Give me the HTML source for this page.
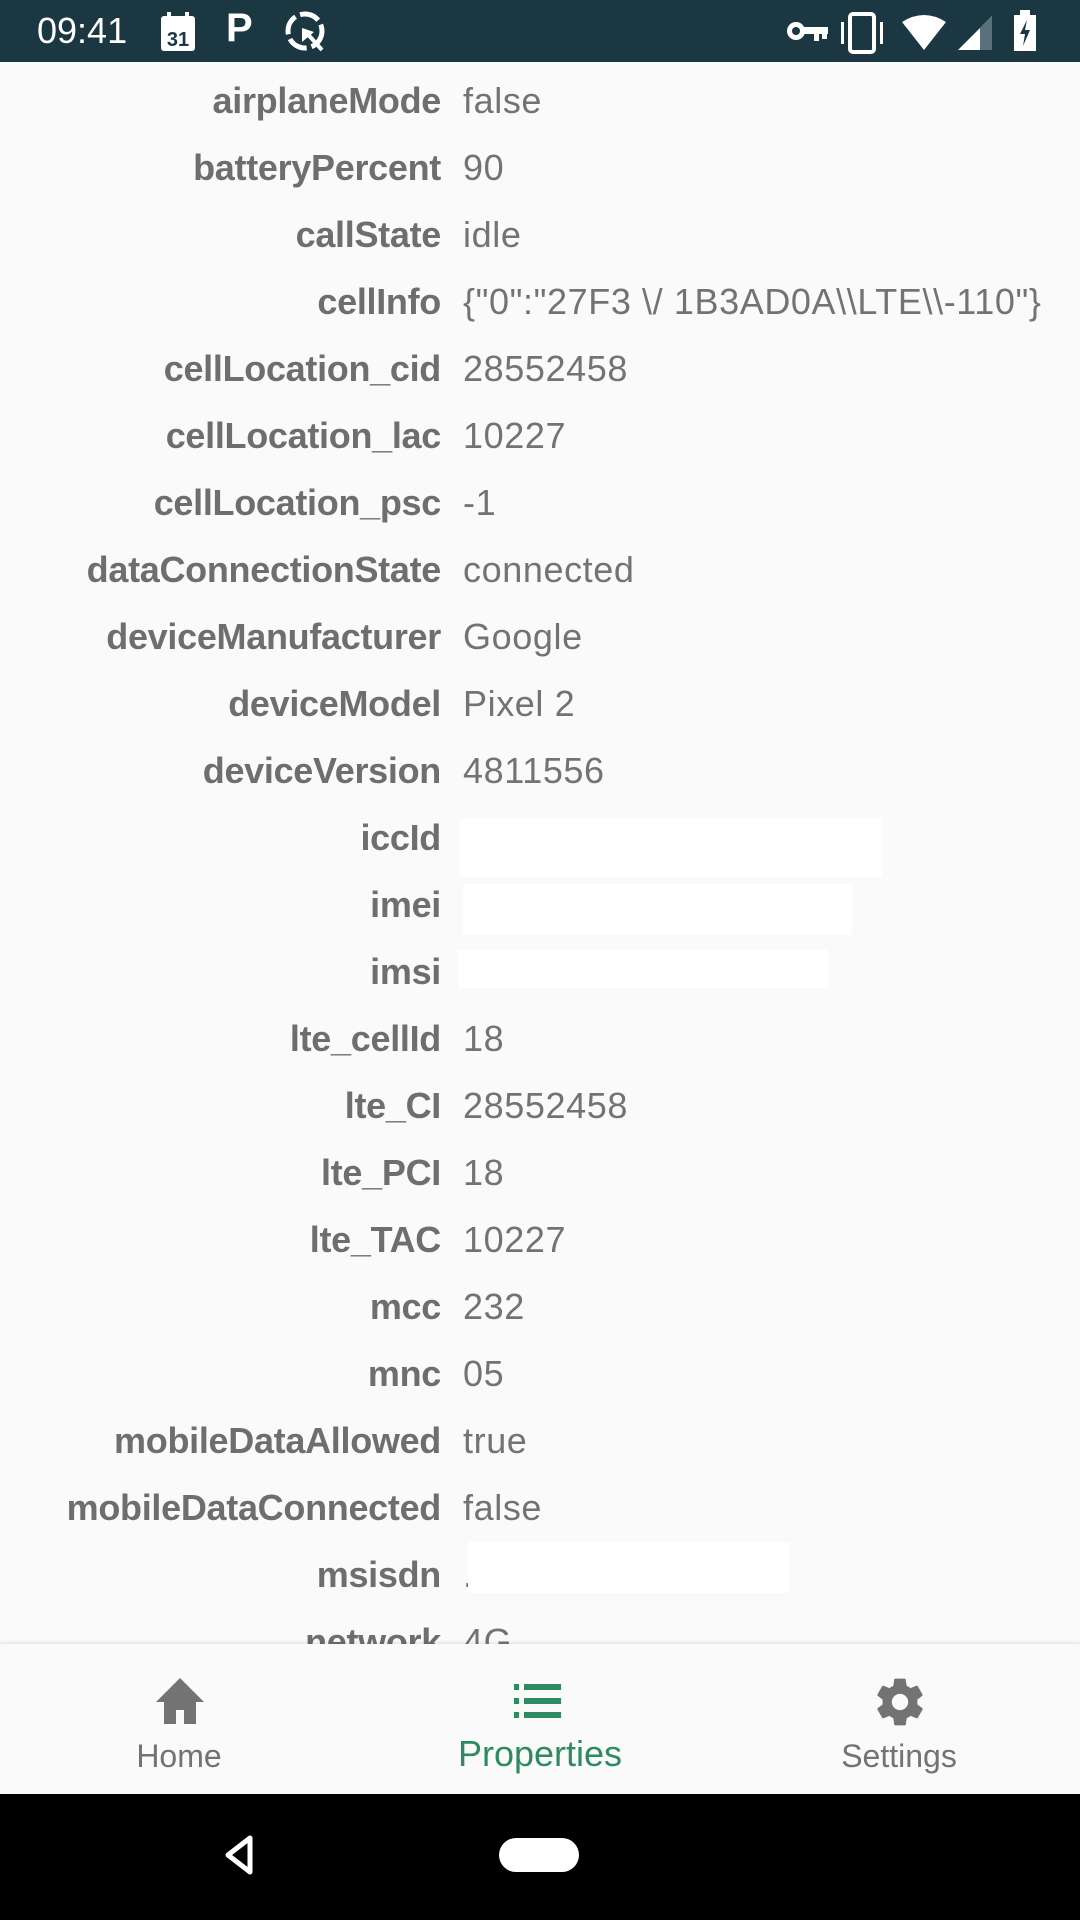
<!DOCTYPE html>
<html><head><meta charset="utf-8"><style>
*{margin:0;padding:0;box-sizing:border-box}
body{width:1080px;height:1920px;background:#fafafa;font-family:"Liberation Sans",Roboto,sans-serif;position:relative;overflow:hidden}
.sb{position:absolute;left:0;top:0;width:1080px;height:62px;background:#1a3742;color:#fff}
.row{position:absolute;left:0;width:1080px;height:60px;line-height:60px;font-size:36px}
.k{position:absolute;right:639px;font-weight:bold;color:#6e6e6e;white-space:nowrap;letter-spacing:-0.3px}
.v{position:absolute;left:463px;color:#737373;white-space:nowrap;letter-spacing:0.6px}
.red{position:absolute;background:#fff}
.nav{position:absolute;left:0;top:1644px;width:1080px;height:150px;background:#fafafa;box-shadow:0 -2px 3px rgba(0,0,0,.08)}
.lab{position:absolute;top:1738px;font-size:31px;color:#737373;transform:translateX(-50%)}
.bot{position:absolute;left:0;top:1794px;width:1080px;height:126px;background:#000}
</style></head><body>
<div class="sb">
<div style="position:absolute;left:37px;top:10px;font-size:36px;">09:41</div>
<svg style="position:absolute;left:160px;top:12px" width="36" height="40"><rect x="1" y="4" width="34" height="35" rx="3" fill="#fff"/><rect x="7" y="0" width="4" height="8" fill="#fff"/><rect x="25" y="0" width="4" height="8" fill="#fff"/><text x="18" y="34" font-size="20" font-family="Liberation Sans" text-anchor="middle" fill="#1a3742" font-weight="bold">31</text></svg>
<div style="position:absolute;left:226px;top:6px;font-size:40px;font-weight:bold">P</div>
<svg style="position:absolute;left:284px;top:10px" width="46" height="46"><circle cx="21" cy="21" r="17" fill="none" stroke="#fff" stroke-width="5" stroke-dasharray="20 5"/><path d="M20 20 L38 40" stroke="#fff" stroke-width="4"/><path d="M18 18 L18 32 L30 22Z" fill="#fff"/></svg>
<svg style="position:absolute;left:786px;top:18px" width="44" height="26"><circle cx="10" cy="13" r="9" fill="#fff"/><circle cx="10" cy="13" r="4" fill="#1a3742"/><rect x="16" y="9" width="26" height="7" fill="#fff"/><rect x="28" y="14" width="5" height="9" fill="#fff"/><rect x="36" y="14" width="5" height="7" fill="#fff"/></svg>
<svg style="position:absolute;left:838px;top:12px" width="50" height="42"><rect x="12" y="2" width="24" height="38" rx="3" fill="none" stroke="#fff" stroke-width="4"/><rect x="3" y="10" width="3" height="22" fill="#fff"/><rect x="42" y="10" width="3" height="22" fill="#fff"/></svg>
<svg style="position:absolute;left:900px;top:14px" width="48" height="38"><path d="M2 8 Q24 -6 46 8 L24 36Z" fill="#fff"/></svg>
<svg style="position:absolute;left:956px;top:14px" width="40" height="38"><path d="M36 2 V36 H2Z" fill="#fff"/><path d="M24 14 L36 2 V36 H24Z" fill="#5b717a"/></svg>
<svg style="position:absolute;left:1012px;top:10px" width="26" height="42"><rect x="8" y="0" width="10" height="6" fill="#fff"/><rect x="2" y="5" width="22" height="36" fill="#fff"/><path d="M15 10 L8 24 H13 L11 36 L18 20 H13Z" fill="#1a3742"/></svg>
</div>

<div class="row" style="top:71px"><span class="k">airplaneMode</span><span class="v">false</span></div>
<div class="row" style="top:138px"><span class="k">batteryPercent</span><span class="v">90</span></div>
<div class="row" style="top:205px"><span class="k">callState</span><span class="v">idle</span></div>
<div class="row" style="top:272px"><span class="k">cellInfo</span><span class="v">{"0":"27F3 \/ 1B3AD0A\\LTE\\-110"}</span></div>
<div class="row" style="top:339px"><span class="k">cellLocation_cid</span><span class="v">28552458</span></div>
<div class="row" style="top:406px"><span class="k">cellLocation_lac</span><span class="v">10227</span></div>
<div class="row" style="top:473px"><span class="k">cellLocation_psc</span><span class="v">-1</span></div>
<div class="row" style="top:540px"><span class="k">dataConnectionState</span><span class="v">connected</span></div>
<div class="row" style="top:607px"><span class="k">deviceManufacturer</span><span class="v">Google</span></div>
<div class="row" style="top:674px"><span class="k">deviceModel</span><span class="v">Pixel 2</span></div>
<div class="row" style="top:741px"><span class="k">deviceVersion</span><span class="v">4811556</span></div>
<div class="row" style="top:808px"><span class="k">iccId</span></div>
<div class="row" style="top:875px"><span class="k">imei</span></div>
<div class="row" style="top:942px"><span class="k">imsi</span></div>
<div class="row" style="top:1009px"><span class="k">lte_cellId</span><span class="v">18</span></div>
<div class="row" style="top:1076px"><span class="k">lte_CI</span><span class="v">28552458</span></div>
<div class="row" style="top:1143px"><span class="k">lte_PCI</span><span class="v">18</span></div>
<div class="row" style="top:1210px"><span class="k">lte_TAC</span><span class="v">10227</span></div>
<div class="row" style="top:1277px"><span class="k">mcc</span><span class="v">232</span></div>
<div class="row" style="top:1344px"><span class="k">mnc</span><span class="v">05</span></div>
<div class="row" style="top:1411px"><span class="k">mobileDataAllowed</span><span class="v">true</span></div>
<div class="row" style="top:1478px"><span class="k">mobileDataConnected</span><span class="v">false</span></div>
<div class="row" style="top:1545px"><span class="k">msisdn</span><span class="v">.</span></div>
<div class="row" style="top:1612px"><span class="k">network</span><span class="v">4G</span></div>

<div class="red" style="left:460px;top:818px;width:422px;height:59px"></div>
<div class="red" style="left:463px;top:884px;width:389px;height:51px"></div>
<div class="red" style="left:458px;top:950px;width:370px;height:38px"></div>
<div class="red" style="left:468px;top:1542px;width:321px;height:51px"></div>

<div class="nav"></div>
<svg style="position:absolute;left:152px;top:1676px" width="56" height="50"><path d="M28 2 L4 26 H12 V48 H24 V34 H32 V48 H44 V26 H52Z" fill="#737373"/></svg>
<svg style="position:absolute;left:514px;top:1682px" width="50" height="40"><g fill="#2e8b61"><rect x="0" y="2" width="5" height="6"/><rect x="10" y="2" width="37" height="6"/><rect x="0" y="16" width="5" height="6"/><rect x="10" y="16" width="37" height="6"/><rect x="0" y="30" width="5" height="6"/><rect x="10" y="30" width="37" height="6"/></g></svg>
<svg style="position:absolute;left:872px;top:1674px" width="56" height="56" viewBox="0 0 24 24"><path fill="#737373" d="M19.4 13c.04-.3.06-.6.06-1s-.02-.7-.06-1l2.1-1.650c.2-.15.24-.42.12-.64l-2-3.460c-.12-.22-.39-.3-.61-.22l-2.490 1c-.52-.4-1.080-.73-1.690-.98l-.38-2.650A.49.49 0 0 0 14 2h-4c-.25 0-.46.18-.49.42l-.38 2.650c-.61.25-1.170.59-1.690.98l-2.490-1c-.23-.09-.49 0-.61.22l-2 3.460c-.13.22-.07.49.12.64L4.570 11c-.04.32-.07.65-.07 1s.03.68.07 1l-2.110 1.650c-.19.15-.24.42-.12.64l2 3.460c.12.22.39.3.61.22l2.490-1c.52.4 1.080.73 1.690.98l.38 2.650c.03.24.24.42.49.42h4c.25 0 .46-.18.49-.42l.38-2.650c.61-.25 1.170-.59 1.690-.98l2.490 1c.23.09.49 0 .61-.22l2-3.460c.12-.22.07-.49-.12-.64L19.4 13zM12 15.5a3.5 3.5 0 1 1 0-7 3.5 3.5 0 0 1 0 7z"/></svg>
<div class="lab" style="left:179px;font-size:32px">Home</div>
<div class="lab" style="left:540px;color:#2e8b61;font-size:36px;top:1733px">Properties</div>
<div class="lab" style="left:899px;font-size:32px">Settings</div>

<div class="bot">
<svg style="position:absolute;left:222px;top:40px" width="34" height="42"><path d="M28 4 L6 21 L28 38Z" fill="none" stroke="#fff" stroke-width="5" stroke-linejoin="round"/></svg>
<div style="position:absolute;left:499px;top:44px;width:80px;height:34px;border-radius:17px;background:#fff"></div>
</div>
</body></html>
